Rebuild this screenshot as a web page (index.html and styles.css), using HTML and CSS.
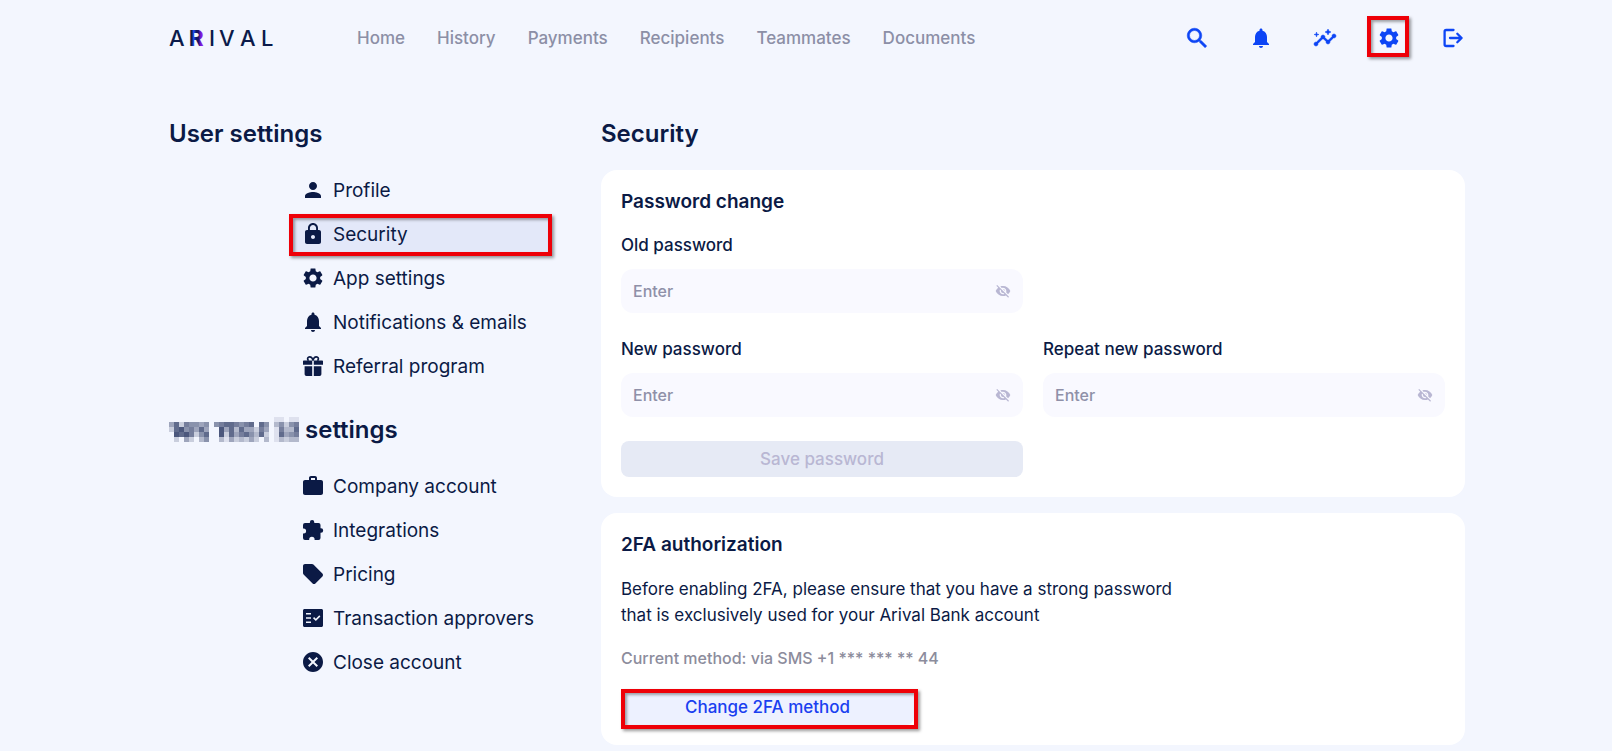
FILE: index.html
```html
<!DOCTYPE html>
<html lang="en">
<head>
<meta charset="utf-8">
<meta name="viewport" content="width=device-width, initial-scale=1">
<title>Arival – Security settings</title>
<link rel="stylesheet" href="styles.css">
</head>
<body>
<svg class="sprite" aria-hidden="true">
  <symbol id="i-gear" viewBox="0 0 24 24"><path d="M19.14 12.94c.04-.3.06-.61.06-.94 0-.32-.02-.64-.07-.94l2.03-1.58c.18-.14.23-.41.12-.61l-1.92-3.32c-.12-.22-.37-.29-.59-.22l-2.39.96c-.5-.38-1.03-.7-1.62-.94l-.36-2.54c-.04-.24-.24-.41-.48-.41h-3.84c-.24 0-.43.17-.47.41l-.36 2.54c-.59.24-1.13.57-1.62.94l-2.39-.96c-.22-.08-.47 0-.59.22L2.74 8.87c-.12.21-.08.47.12.61l2.03 1.58c-.05.3-.09.63-.09.94s.02.64.07.94l-2.03 1.58c-.18.14-.23.41-.12.61l1.92 3.32c.12.22.37.29.59.22l2.39-.96c.5.38 1.03.7 1.62.94l.36 2.54c.05.24.24.41.48.41h3.84c.24 0 .44-.17.47-.41l.36-2.54c.59-.24 1.13-.56 1.62-.94l2.39.96c.22.08.47 0 .59-.22l1.92-3.32c.12-.22.07-.47-.12-.61l-2.01-1.58zM12 15.6c-1.98 0-3.6-1.62-3.6-3.6s1.62-3.6 3.6-3.6 3.6 1.62 3.6 3.6-1.62 3.6-3.6 3.6z"/></symbol>
  <symbol id="i-bell" viewBox="0 0 24 24"><path d="M12 22c1.1 0 2-.9 2-2h-4c0 1.1.89 2 2 2zm6-6v-5c0-3.07-1.64-5.64-4.5-6.32V4c0-.83-.67-1.5-1.5-1.5s-1.5.67-1.5 1.5v.68C7.63 5.36 6 7.92 6 11v5l-2 2v1h16v-1l-2-2z"/></symbol>
  <symbol id="i-eye-off" viewBox="0 0 24 24"><path d="M12 7c2.76 0 5 2.24 5 5 0 .65-.13 1.26-.36 1.83l2.92 2.92c1.51-1.26 2.7-2.89 3.43-4.75-1.73-4.39-6-7.5-11-7.5-1.4 0-2.74.25-3.98.7l2.16 2.16C10.74 7.13 11.35 7 12 7zM2 4.27l2.28 2.28.46.46C3.08 8.3 1.78 10.02 1 12c1.73 4.39 6 7.5 11 7.5 1.55 0 3.03-.3 4.38-.84l.42.42L19.73 22 21 20.73 3.27 3 2 4.27zM7.53 9.8l1.55 1.55c-.05.21-.08.43-.08.65 0 1.66 1.34 3 3 3 .22 0 .44-.03.65-.08l1.55 1.55c-.67.33-1.41.53-2.2.53-2.76 0-5-2.24-5-5 0-.79.2-1.53.53-2.2zm4.31-.78l3.15 3.15.02-.16c0-1.66-1.34-3-3-3l-.17.01z"/></symbol>
</svg>

<div class="page">
  <header class="topbar">
    <a class="logo" href="#" aria-label="Arival">
      <svg width="106" height="32" viewBox="0 0 106 32">
        <defs>
          <linearGradient id="logo-r" gradientUnits="userSpaceOnUse" x1="20" x2="37" y1="0" y2="0">
            <stop offset="0" stop-color="#0b1a4a"/>
            <stop offset=".16" stop-color="#0b1a4a"/>
            <stop offset=".28" stop-color="#1f4bff"/>
            <stop offset=".42" stop-color="#101a5e"/>
            <stop offset=".55" stop-color="#1a1166"/>
            <stop offset=".7" stop-color="#7a1be0"/>
            <stop offset="1" stop-color="#9a20f0"/>
          </linearGradient>
        </defs>
        <text class="logo-text" y="24" x="0">A</text>
        <text class="logo-text logo-bold" y="24" x="20">R</text>
        <text class="logo-text" y="24" x="40">I</text>
        <text class="logo-text" y="24" x="50">V</text>
        <text class="logo-text" y="24" x="71">A</text>
        <text class="logo-text" y="24" x="92">L</text>
      </svg>
    </a>
    <nav class="nav" aria-label="Main">
      <a href="#">Home</a>
      <a href="#">History</a>
      <a href="#">Payments</a>
      <a href="#">Recipients</a>
      <a href="#">Teammates</a>
      <a href="#">Documents</a>
    </nav>
    <div class="tools">
      <button class="tool" type="button" aria-label="Search"><svg class="icon heavy" viewBox="0.95 0.95 21.6 21.6"><path d="M15.5 14h-.79l-.28-.27C15.41 12.59 16 11.11 16 9.5 16 5.91 13.09 3 9.5 3S3 5.91 3 9.5 5.91 16 9.5 16c1.61 0 3.09-.59 4.23-1.57l.27.28v.79l5 4.99L20.49 19l-4.99-5zm-6 0C7.01 14 5 11.99 5 9.5S7.01 5 9.5 5 14 7.01 14 9.5 11.99 14 9.5 14z"/></svg></button>
      <button class="tool" type="button" aria-label="Notifications"><svg class="icon"><use href="#i-bell"/></svg></button>
      <button class="tool" type="button" aria-label="Insights"><svg class="icon heavy" viewBox="0 0 24 24"><path d="M21 8c-1.45 0-2.26 1.44-1.93 2.51l-3.55 3.56c-.3-.09-.74-.09-1.04 0l-2.55-2.55C12.27 10.45 11.46 9 10 9c-1.45 0-2.27 1.44-1.93 2.52l-4.56 4.55C2.44 15.74 1 16.55 1 18c0 1.1.9 2 2 2 1.45 0 2.26-1.44 1.93-2.51l4.55-4.56c.3.09.74.09 1.04 0l2.55 2.55C12.73 16.55 13.54 18 15 18c1.45 0 2.27-1.44 1.93-2.52l3.56-3.55c1.07.33 2.51-.48 2.51-1.93 0-1.1-.9-2-2-2zM15 9l.94-2.07L18 6l-2.06-.93L15 3l-.92 2.07L12 6l2.08.93zM3.5 11L4 9l2-.5L4 8l-.5-2L3 8l-2 .5L3 9z"/></svg></button>
      <button class="tool marked" type="button" aria-label="Settings"><svg class="icon"><use href="#i-gear"/></svg></button>
      <button class="tool" type="button" aria-label="Log out"><svg class="icon stroked" viewBox="0 0 24 24"><path d="M12.500 4H5.200a1.600 1.600 0 0 0-1.600 1.600v12.800A1.600 1.600 0 0 0 5.200 20h7.300M9 12h11.500M16.300 7.700l4.300 4.300-4.300 4.300"/></svg></button>
    </div>
  </header>

  <main class="layout">
    <aside class="sidebar">
      <section>
        <h2 class="heading">User settings</h2>
        <nav class="menu" aria-label="User settings">
          <a href="#"><svg class="icon" viewBox="0 0 24 24"><path d="M12 12c2.21 0 4-1.79 4-4s-1.79-4-4-4-4 1.790-4 4 1.790 4 4 4zm0 2c-2.670 0-8 1.340-8 4v2h16v-2c0-2.660-5.330-4-8-4z"/></svg>Profile</a>
          <a href="#" class="current marked" aria-current="page"><svg class="icon" viewBox="0 0 24 24"><path d="M18 8h-1V6c0-2.760-2.240-5-5-5S7 3.240 7 6v2H6c-1.100 0-2 .9-2 2v10c0 1.100.9 2 2 2h12c1.100 0 2-.9 2-2V10c0-1.100-.9-2-2-2zm-6 9c-1.100 0-2-.9-2-2s.9-2 2-2 2 .9 2 2-.9 2-2 2zm3.100-9H8.900V6c0-1.710 1.390-3.100 3.100-3.100 1.710 0 3.100 1.390 3.100 3.100v2z"/></svg>Security</a>
          <a href="#"><svg class="icon"><use href="#i-gear"/></svg>App settings</a>
          <a href="#"><svg class="icon"><use href="#i-bell"/></svg>Notifications &amp; emails</a>
          <a href="#"><svg class="icon" viewBox="0 0 24 24"><path d="M2.800 6.500h8.400v4.300H2V7.300a.8.8 0 0 1 .8-.8zm10 0h8.400a.8.8 0 0 1 .8.8v3.500h-9.200zM3.600 12.200h7.600V22H5.400a1.800 1.800 0 0 1-1.800-1.800zm9.200 0h7.600v8a1.800 1.800 0 0 1-1.800 1.800h-5.800z"/><path class="bow" d="M12 6.600C11.600 4 10.200 2.800 8.600 2.800a2 2 0 0 0-1.600 3.200l.5.8M12 6.600c.4-2.600 1.800-3.800 3.400-3.800a2 2 0 0 1 1.600 3.200l-.5.8"/></svg>Referral program</a>
        </nav>
      </section>
      <section>
        <h2 class="heading company"><svg id="masked-name" class="mask" width="130" height="30" viewBox="0 0 130 30" role="img" aria-label="Hidden company name"></svg>settings</h2>
        <nav class="menu" aria-label="Company settings">
          <a href="#"><svg class="icon" viewBox="0 0 24 24"><path d="M20 6h-4V4c0-1.110-.89-2-2-2h-4c-1.110 0-2 .89-2 2v2H4c-1.110 0-1.990.89-1.990 2L2 19c0 1.110.89 2 2 2h16c1.110 0 2-.89 2-2V8c0-1.110-.89-2-2-2zm-6 0h-4V4h4v2z"/></svg>Company account</a>
          <a href="#"><svg class="icon" viewBox="0 0 24 24"><path d="M19.500 10.300V7a2 2 0 0 0-2-2h-4.200v-.8a2.200 2.200 0 0 0-4.400 0V5H4a2 2 0 0 0-2 2v3.400h.6a2.500 2.500 0 0 1 0 5H2V20a2 2 0 0 0 2 2h4.200v-.6a2.700 2.700 0 0 1 5.400 0v.6h3.900a2 2 0 0 0 2-2v-5.300h.5a2.200 2.200 0 0 0 0-4.400z"/></svg>Integrations</a>
          <a href="#"><svg class="icon" viewBox="0 0 24 24"><path d="M21.410 11.580l-9-9C12.050 2.220 11.550 2 11 2H4c-1.100 0-2 .9-2 2v7c0 .55.22 1.050.59 1.420l9 9c.36.36.86.58 1.410.58s1.050-.22 1.410-.59l7-7c.37-.36.59-.86.59-1.410s-.23-1.060-.59-1.420z"/></svg>Pricing</a>
          <a href="#"><svg class="icon" viewBox="0 0 24 24"><path fill-rule="evenodd" d="M20.500 3h-17C2.700 3 2 3.700 2 4.500v15c0 .8.7 1.500 1.500 1.500h17c.8 0 1.500-.7 1.500-1.500v-15c0-.8-.7-1.500-1.500-1.500zM10 17H5v-1.600h5zm0-4.200H5v-1.600h5zm0-4.200H5V7h5zM14.820 15L12 12.160l1.100-1.100 1.720 1.720L18.300 9.300l1.100 1.100z"/></svg>Transaction approvers</a>
          <a href="#"><svg class="icon" viewBox="0 0 24 24"><path d="M12 2C6.470 2 2 6.470 2 12s4.470 10 10 10 10-4.470 10-10S17.530 2 12 2zm5 13.590L15.590 17 12 13.410 8.410 17 7 15.590 10.590 12 7 8.410 8.410 7 12 10.590 15.590 7 17 8.410 13.410 12 17 15.590z"/></svg>Close account</a>
        </nav>
      </section>
    </aside>

    <div class="content">
      <h1 class="heading">Security</h1>
      <form class="card">
        <h2 class="card-title">Password change</h2>
        <div class="fields">
          <div class="field">
            <label for="old-password">Old password</label>
            <div class="control">
              <input id="old-password" type="password" placeholder="Enter">
              <button class="reveal" type="button" aria-label="Show old password"><svg><use href="#i-eye-off"/></svg></button>
            </div>
          </div>
          <div class="field field-start">
            <label for="new-password">New password</label>
            <div class="control">
              <input id="new-password" type="password" placeholder="Enter">
              <button class="reveal" type="button" aria-label="Show new password"><svg><use href="#i-eye-off"/></svg></button>
            </div>
          </div>
          <div class="field">
            <label for="repeat-password">Repeat new password</label>
            <div class="control">
              <input id="repeat-password" type="password" placeholder="Enter">
              <button class="reveal" type="button" aria-label="Show repeated password"><svg><use href="#i-eye-off"/></svg></button>
            </div>
          </div>
          <button class="button save field-start" type="submit" disabled>Save password</button>
        </div>
      </form>

      <section class="card">
        <h2 class="card-title">2FA authorization</h2>
        <p class="text">Before enabling 2FA, please ensure that you have a strong password<br>that is exclusively used for your Arival Bank account</p>
        <p class="method">Current method: via SMS +1 *** *** ** 44</p>
        <button class="button change marked" type="button">Change 2FA method</button>
      </section>
    </div>
  </main>
</div>
<script src="mask.js"></script>
</body>
</html>
```
FILE: styles.css
```css
* {
  box-sizing: border-box;
}

body {
  margin: 0;
  padding-left: 22px;
  background: #f3f6fe;
  color: #0b1a45;
  font-family: Inter, "Noto Sans", sans-serif;
  font-size: 16px;
}

h1,
h2,
p {
  margin: 0;
}

a {
  color: inherit;
  text-decoration: none;
}

button {
  border: 0;
  padding: 0;
  background: none;
  color: inherit;
  font: inherit;
  cursor: pointer;
}

.sprite {
  display: none;
}

.page {
  max-width: 1296px;
  margin: 0 auto;
}

.icon {
  display: block;
  flex: none;
  width: 24px;
  height: 24px;
  fill: currentColor;
}

.stroked {
  fill: none;
  stroke: currentColor;
  stroke-width: 2.3;
  stroke-linecap: round;
  stroke-linejoin: round;
}

.heavy {
  stroke: currentColor;
  stroke-width: 0.5;
}

.bow {
  fill: none;
  stroke: currentColor;
  stroke-width: 1.7;
}

/* Red callout frame drawn over the element */
.marked {
  position: relative;
}

.marked::after {
  content: "";
  position: absolute;
  inset: 0;
  border: 4px solid #ee0008;
  box-shadow: 2px 2px 3px rgba(0, 0, 0, 0.4), inset 2px 2px 3px rgba(0, 0, 0, 0.35);
  pointer-events: none;
}

/* Top bar */
.topbar {
  display: flex;
  align-items: center;
  height: 76px;
}

.logo {
  flex: none;
  margin-right: 82px;
}

.logo svg {
  display: block;
}

.logo-text {
  font-size: 22px;
  font-weight: 500;
  fill: #0b1a4a;
}

.logo-bold {
  font-weight: 800;
  fill: url(#logo-r);
}

.nav {
  display: flex;
  gap: 32px;
  color: #8c8fa6;
  font-size: 17px;
  font-weight: 500;
}

.tools {
  display: flex;
  gap: 40px;
  margin-left: auto;
  color: #0d45f5;
}

.tool.marked::after {
  inset: -10px -8px -7px -10px;
}

/* Columns */
.layout {
  display: grid;
  grid-template-columns: 1fr 2fr;
  padding-top: 40px;
}

.heading {
  font-size: 24px;
  font-weight: 600;
  line-height: 36px;
}

.sidebar {
  display: flex;
  flex-direction: column;
  gap: 24px;
  padding-right: 49px;
}

.sidebar .heading {
  margin-bottom: 16px;
}

.company {
  display: flex;
  align-items: center;
  gap: 6px;
}

.mask {
  display: block;
  fill: #0b1a4a;
}

.menu {
  display: flex;
  flex-direction: column;
  margin-left: 120px;
}

.menu a {
  display: flex;
  align-items: center;
  gap: 8px;
  height: 44px;
  padding-left: 12px;
  font-size: 19px;
  white-space: nowrap;
}

.menu .current {
  background: #e3e8f9;
  background-clip: content-box;
  padding: 2px 0;
}

.menu .current .icon {
  margin-left: 12px;
}

.menu .current::after {
  top: 2px;
}

/* Cards */
.content {
  display: flex;
  flex-direction: column;
  gap: 16px;
}

.content .heading {
  margin-bottom: 2px;
}

.card {
  padding: 20px;
  border-radius: 16px;
  background: #fff;
}

.card-title {
  margin-bottom: 20px;
  font-size: 19px;
  font-weight: 600;
  line-height: 23px;
}

.fields {
  display: grid;
  grid-template-columns: 1fr 1fr;
  gap: 24px 20px;
}

.field-start {
  grid-column: 1;
}

.field label {
  display: block;
  margin-bottom: 12px;
  font-size: 17px;
  font-weight: 500;
  line-height: 24px;
}

.control {
  display: flex;
  align-items: center;
  height: 44px;
  padding: 0 12px;
  border-radius: 12px;
  background: #f9f9ff;
}

.control input {
  flex: 1;
  min-width: 0;
  border: 0;
  padding: 0;
  outline: 0;
  background: none;
  color: inherit;
  font: inherit;
  font-weight: 500;
}

.control input::placeholder {
  color: #8f90a8;
  opacity: 1;
}

.reveal svg {
  display: block;
  width: 16px;
  height: 16px;
  fill: #b9b7d3;
}

.button {
  height: 36px;
  border-radius: 8px;
  font-size: 17px;
  font-weight: 500;
}

.save {
  background: #e6eaf5;
  color: #b9b7d3;
  cursor: default;
}

.text {
  margin-bottom: 20px;
  font-size: 17px;
  line-height: 26px;
}

.method {
  margin-bottom: 20px;
  color: #8c8c9c;
  font-weight: 500;
  line-height: 21px;
}

.change {
  display: block;
  width: 293px;
  background: #edf1ff;
  color: #1a3ff0;
}

.change::after {
  right: -4px;
  bottom: -4px;
}
```
FILE: mask.js
```js
// Mosaic that hides the company name: one digit per 5px cell, 0 clear to 9 solid.
const rows = [
  "00000000000000000000011011",
  "47265545056776567075035256",
  "27856474008473744264016337",
  "08786257008274675372017456",
  "02042035003142324203013233"
];
const mask = document.getElementById("masked-name");
rows.forEach((row, y) => {
  [...row].forEach((level, x) => {
    if (level === "0") return;
    const cell = document.createElementNS("http://www.w3.org/2000/svg", "rect");
    cell.setAttribute("x", x * 5);
    cell.setAttribute("y", y * 5 + 2);
    cell.setAttribute("width", 5);
    cell.setAttribute("height", 5);
    cell.setAttribute("fill-opacity", level / 11);
    mask.append(cell);
  });
});
```
